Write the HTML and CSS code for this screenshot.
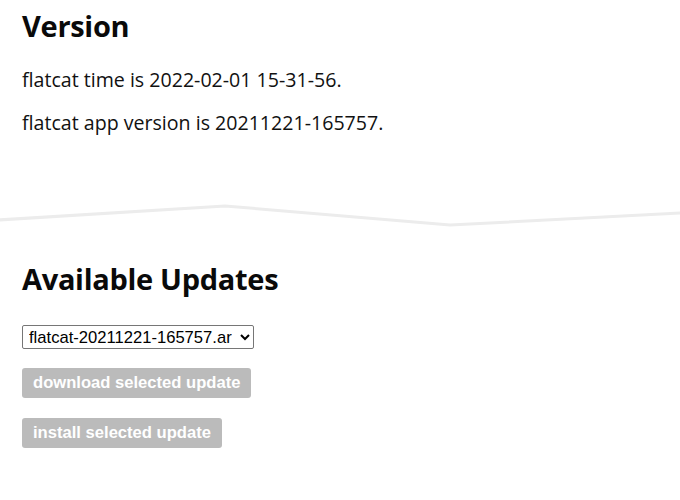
FILE: index.html
```html
<!DOCTYPE html>
<html>
<head>
<meta charset="utf-8">
<link rel="stylesheet" href="styles.css">
</head>
<body>
<section class="panel">
  <h1 class="title">Version</h1>
  <p class="info">flatcat time is 2022-02-01 15-31-56.</p>
  <p class="info">flatcat app version is 20211221-165757.</p>
</section>
<svg class="divider" viewBox="0 0 680 30" preserveAspectRatio="none" width="680" height="30">
  <polyline points="-2,17 225,3 450,22 682,10" fill="none" stroke="#ececec" stroke-width="3"/>
</svg>
<section class="panel updates">
  <h1 class="title">Available Updates</h1>
  <select class="picker">
    <option>flatcat-20211221-165757.armv7l.tar.gz</option>
  </select>
  <div class="actions">
    <button class="btn" disabled>download selected update</button>
    <button class="btn" disabled>install selected update</button>
  </div>
</section>
</body>
</html>
```
FILE: styles.css
```css
html, body {
  margin: 0;
  padding: 0;
  background: #fff;
}
body {
  font-family: "Open Sans", "Noto Sans", sans-serif;
  color: #111;
  width: 680px;
  height: 500px;
  overflow: hidden;
}
.panel {
  padding: 0 22px;
}
.title {
  font-size: 29px;
  font-weight: 700;
  line-height: 40px;
  margin: 6px 0 0 0;
  color: #0a0a0a;
  letter-spacing: -0.3px;
}
.info {
  font-size: 19.6px;
  line-height: 24px;
  margin: 22px 0 0 0;
}
.info + .info {
  margin-top: 19px;
}
.divider {
  display: block;
  margin-top: 68px;
}
.updates .title {
  margin-top: 26px;
}
.picker {
  display: block;
  margin-top: 26px;
  width: 232px;
  height: 24px;
  font-family: "Liberation Sans", Arial, sans-serif;
  font-size: 16.6px;
  color: #000;
  background: #fff;
  border: 1px solid #767676;
  border-radius: 2px;
  padding: 0 5px 0 2px;
}
.actions {
  display: flex;
  flex-direction: column;
  align-items: flex-start;
  gap: 20px;
  margin-top: 19px;
}
.btn {
  font-family: "Liberation Sans", Arial, sans-serif;
  font-size: 16.6px;
  font-weight: 700;
  color: #fff;
  background: #bbbbbb;
  border: none;
  border-radius: 3px;
  height: 30px;
  padding: 0 11px;
}
```
